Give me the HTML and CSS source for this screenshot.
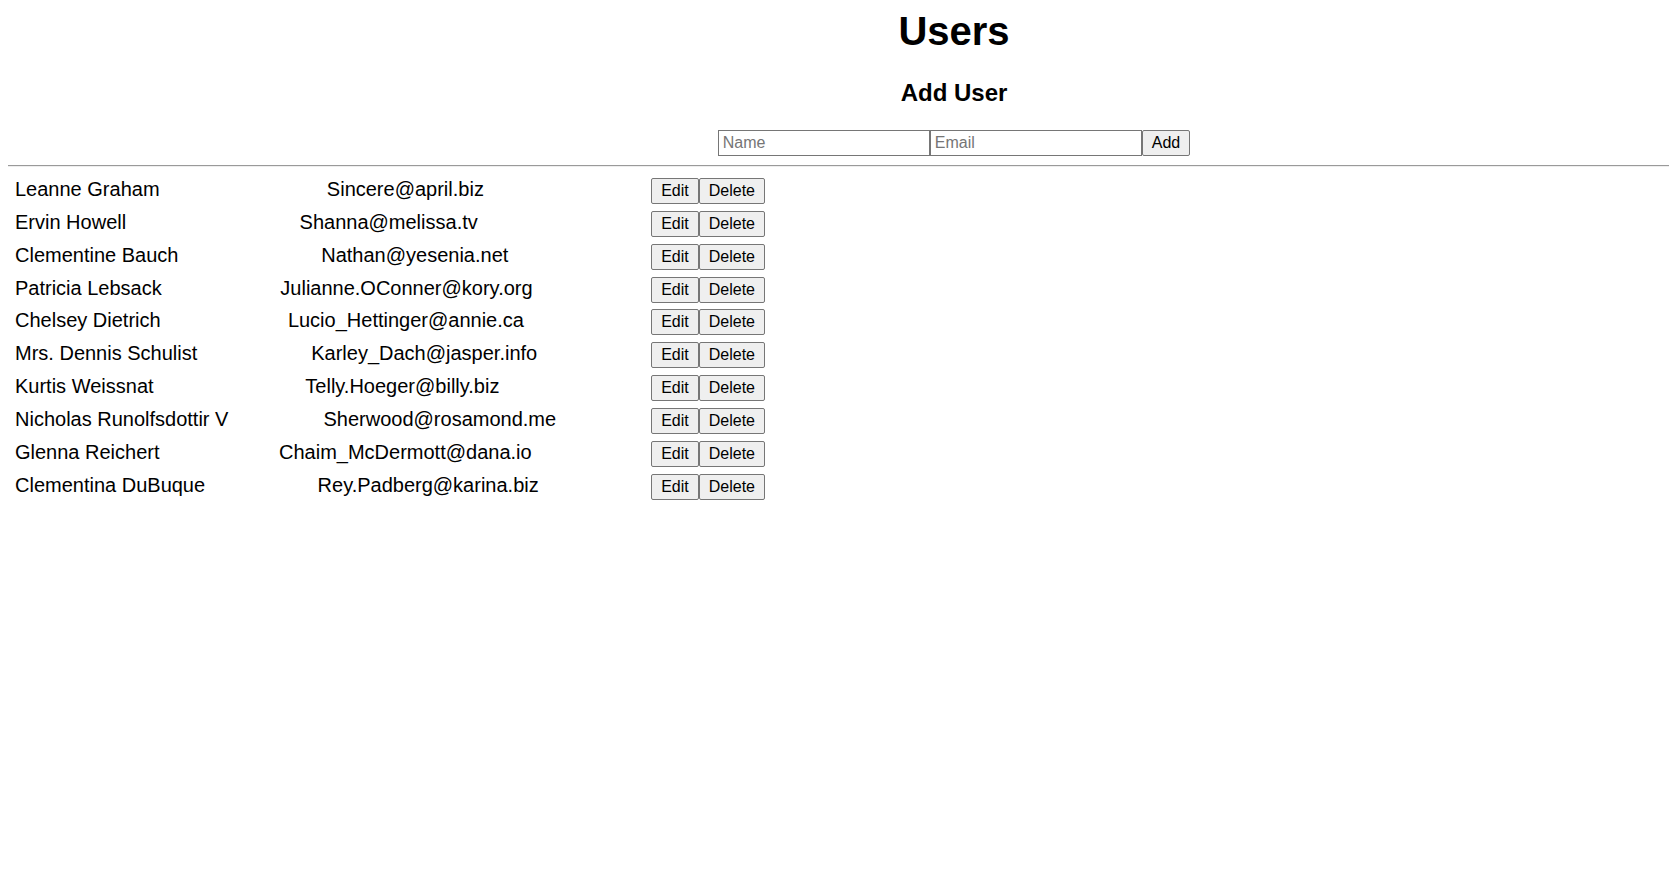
FILE: index.html
```html
<!DOCTYPE html>
<html lang="en">
<head>
<meta charset="utf-8">
<title>Users</title>
<link rel="stylesheet" href="styles.css">
</head>
<body>
<div class="app">
  <header class="header">
    <h1 class="title">Users</h1>
    <h2 class="subtitle">Add User</h2>
    <form class="add-form">
      <input class="field" type="text" placeholder="Name">
      <input class="field" type="email" placeholder="Email">
      <button class="btn" type="button">Add</button>
    </form>
  </header>
  <hr class="divider">
  <div class="user-list">
    <div class="user-row"><span class="user-name">Leanne Graham</span><span class="user-email">Sincere@april.biz</span><span class="actions"><button class="btn" type="button">Edit</button><button class="btn" type="button">Delete</button></span></div>
    <div class="user-row"><span class="user-name">Ervin Howell</span><span class="user-email">Shanna@melissa.tv</span><span class="actions"><button class="btn" type="button">Edit</button><button class="btn" type="button">Delete</button></span></div>
    <div class="user-row"><span class="user-name">Clementine Bauch</span><span class="user-email">Nathan@yesenia.net</span><span class="actions"><button class="btn" type="button">Edit</button><button class="btn" type="button">Delete</button></span></div>
    <div class="user-row"><span class="user-name">Patricia Lebsack</span><span class="user-email">Julianne.OConner@kory.org</span><span class="actions"><button class="btn" type="button">Edit</button><button class="btn" type="button">Delete</button></span></div>
    <div class="user-row"><span class="user-name">Chelsey Dietrich</span><span class="user-email">Lucio_Hettinger@annie.ca</span><span class="actions"><button class="btn" type="button">Edit</button><button class="btn" type="button">Delete</button></span></div>
    <div class="user-row"><span class="user-name">Mrs. Dennis Schulist</span><span class="user-email">Karley_Dach@jasper.info</span><span class="actions"><button class="btn" type="button">Edit</button><button class="btn" type="button">Delete</button></span></div>
    <div class="user-row"><span class="user-name">Kurtis Weissnat</span><span class="user-email">Telly.Hoeger@billy.biz</span><span class="actions"><button class="btn" type="button">Edit</button><button class="btn" type="button">Delete</button></span></div>
    <div class="user-row"><span class="user-name">Nicholas Runolfsdottir V</span><span class="user-email">Sherwood@rosamond.me</span><span class="actions"><button class="btn" type="button">Edit</button><button class="btn" type="button">Delete</button></span></div>
    <div class="user-row"><span class="user-name">Glenna Reichert</span><span class="user-email">Chaim_McDermott@dana.io</span><span class="actions"><button class="btn" type="button">Edit</button><button class="btn" type="button">Delete</button></span></div>
    <div class="user-row"><span class="user-name">Clementina DuBuque</span><span class="user-email">Rey.Padberg@karina.biz</span><span class="actions"><button class="btn" type="button">Edit</button><button class="btn" type="button">Delete</button></span></div>
  </div>
</div>
</body>
</html>
```

FILE: styles.css
```css
html {
  overflow-x: hidden;
  scrollbar-width: none;
}

html::-webkit-scrollbar {
  display: none;
}

body {
  margin: 8px;
  font-family: "Liberation Sans", Arial, sans-serif;
  color: #000;
  background: #fff;
}

.header {
  padding-left: 231px;
}

.title {
  margin: 0;
  font-size: 40px;
  font-weight: bold;
  text-align: center;
  line-height: 46px;
}

.subtitle {
  margin: 25px 0 23px;
  font-size: 24px;
  font-weight: bold;
  text-align: center;
  line-height: 28px;
}

.add-form {
  display: flex;
  justify-content: center;
  margin: 0;
}

.field {
  box-sizing: border-box;
  width: 212px;
  height: 26px;
  margin: 0;
  padding: 3px 4px;
  border: 1px solid #767676;
  border-radius: 0;
  font-family: "Liberation Sans", Arial, sans-serif;
  font-size: 16px;
  line-height: 18px;
  color: #000;
  background: #fff;
}

.field::placeholder {
  color: #757575;
}

.btn {
  box-sizing: border-box;
  height: 26px;
  margin: 0;
  padding: 3px 9px;
  border: 1px solid #767676;
  border-radius: 2px;
  background: #efefef;
  font-family: "Liberation Sans", Arial, sans-serif;
  font-size: 16px;
  line-height: 18px;
  color: #000;
}

.divider {
  margin: 9px -40px 11px 0;
  height: 0;
  border: 0;
  border-top: 1px solid #9a9a9a;
  border-bottom: 1px solid #eeeeee;
}

.user-list {
  display: flex;
  flex-direction: column;
  gap: 6.85px;
  width: 750px;
  padding-left: 7px;
}

.user-row {
  display: flex;
  justify-content: space-between;
  align-items: baseline;
  font-size: 20px;
  line-height: 23px;
}

.actions {
  display: flex;
  align-items: baseline;
}
```
